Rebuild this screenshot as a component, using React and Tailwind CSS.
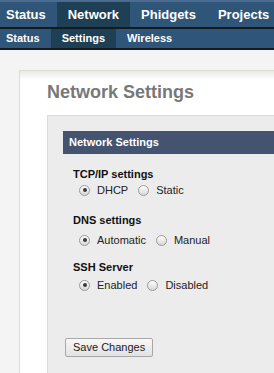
import React from 'react';

const MAIN_NAV = ['Status', 'Network', 'Phidgets', 'Projects'];
const SUB_NAV = ['Status', 'Settings', 'Wireless'];

function Radio({ checked }) {
  return (
    <span className="inline-flex w-[11px] h-[11px] shrink-0 items-center justify-center rounded-full border border-[#9a9a9a] bg-[linear-gradient(#fdfdfd,#d8d8d8)]">
      {checked && <span className="w-[4px] h-[4px] rounded-full bg-[#3a3a3a]" />}
    </span>
  );
}

function Group({ label, options, className, rowClass }) {
  return (
    <div className={className}>
      <div className="text-[11px] leading-[13px] font-bold text-[#111]">{label}</div>
      <div className={`flex items-center h-[16px] text-[11px] leading-[16px] text-[#222] ${rowClass}`}>
        {options.map((opt, i) => (
          <label key={opt} className={`flex items-center ${i === 0 ? 'ml-[6px]' : 'ml-[10px]'}`}>
            <Radio checked={i === 0} />
            <span className="ml-[7px]">{opt}</span>
          </label>
        ))}
      </div>
    </div>
  );
}

export default function App() {
  return (
    <div
      className="w-[274px] h-[373px] overflow-hidden bg-[#f4f4f4]"
      style={{ fontFamily: '"Liberation Sans", Arial, sans-serif' }}
    >
      {/* Top nav */}
      <div className="h-[2px] bg-[#4c6b91]" />
      <div className="flex h-[27px] bg-[#2f5578] border-b-2 border-[#121a22] text-[13px] font-bold text-white">
        {MAIN_NAV.map((item, i) => (
          <div
            key={item}
            className={`flex items-center whitespace-nowrap ${i === 0 ? 'pl-[6px] pr-[11px]' : 'px-[11px]'} ${item === 'Network' ? 'bg-[#1f3f54]' : ''}`}
          >
            {item}
          </div>
        ))}
      </div>

      {/* Sub nav */}
      <div className="flex h-[21px] bg-[#2f5578] border-b-2 border-[#121a22] text-[11px] font-bold text-white">
        {SUB_NAV.map((item, i) => (
          <div
            key={item}
            className={`flex items-center whitespace-nowrap ${i === 0 ? 'pl-[6px] pr-[11px]' : 'px-[11px]'} ${item === 'Settings' ? 'bg-[#1f3f54]' : ''}`}
          >
            {item}
          </div>
        ))}
      </div>

      {/* Page */}
      <div className="pt-[20px] pl-[19px]">
        <div className="w-[300px] h-[320px] border border-[#dcdcd2] bg-[linear-gradient(#e9e9e9,#ffffff_9px)] pl-[27px] pt-[11px]">
          <h1 className="text-[18px] leading-[21px] font-bold text-[#787878]">Network Settings</h1>

          <div className="mt-[12px] h-[300px] border border-[#dcdcd2] bg-[#ececec] pl-[15px] pt-[15px]">
            <div className="h-[23px] flex items-center pl-[6px] bg-[#44536f] text-[11px] font-bold text-white">
              Network Settings
            </div>

            <div className="pl-[10px]">
              <Group className="mt-[14px]" rowClass="mt-[1px]" label="TCP/IP settings" options={['DHCP', 'Static']} />
              <Group className="mt-[16px]" rowClass="mt-[5px]" label="DNS settings" options={['Automatic', 'Manual']} />
              <Group className="mt-[13px]" rowClass="mt-[3px]" label="SSH Server" options={['Enabled', 'Disabled']} />
            </div>

            <button className="mt-[45px] ml-[2px] h-[19px] px-[7px] border border-[#a8a8a8] rounded-[2px] bg-[linear-gradient(#f8f8f8,#e2e2e2)] text-[11px] leading-[17px] text-[#222]">
              Save Changes
            </button>
          </div>
        </div>
      </div>
    </div>
  );
}
